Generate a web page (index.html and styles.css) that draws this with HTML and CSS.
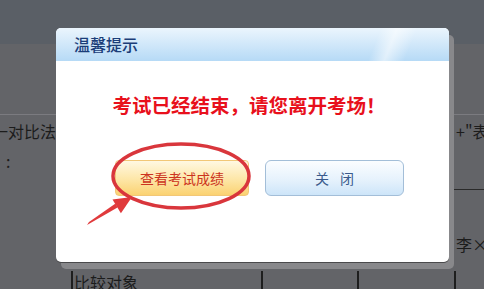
FILE: index.html
```html
<!DOCTYPE html>
<html lang="zh-CN">

<head>
    <meta charset="UTF-8">
    <meta name="viewport" content="width=device-width, initial-scale=1.0">
    <title>温馨提示</title>
    <link rel="stylesheet" href="styles.css">
</head>

<body>

    <!-- pagina de fondo (tabla del examen) -->
    <div class="page">
        <div class="topbar"></div>
        <div class="row row-1">
            <div class="cell cell-main">
                <p class="line line-first">一对比法</p>
                <p class="line line-colon">:</p>
            </div>
            <div class="cell cell-side">
                <p class="line">+"表</p>
            </div>
        </div>
        <div class="row row-2">
            <div class="cell cell-main"></div>
            <div class="cell cell-side cell-top">
                <p class="line">李××</p>
            </div>
        </div>
        <div class="row row-3">
            <div class="cell c1"></div>
            <div class="cell c2">比较对象</div>
            <div class="cell c3"></div>
            <div class="cell c4"></div>
            <div class="cell c5"></div>
        </div>
    </div>

    <!-- dialogo -->
    <div class="dialog">
        <div class="dialog-header">温馨提示</div>
        <div class="dialog-body">
            <p class="message">考试已经结束，请您离开考场！</p>
            <div class="buttons">
                <button class="btn btn-score">查看考试成绩</button>
                <button class="btn btn-close">关 闭</button>
            </div>
        </div>
    </div>

    <!-- marca roja (circulo y flecha) -->
    <svg class="mark" width="484" height="289" viewBox="0 0 484 289">
        <ellipse cx="181" cy="176" rx="68" ry="32" fill="none" stroke="#d9363c" stroke-width="3.5" />
        <polygon points="87,225 89,222 115.5,203.5 117.5,207.5" fill="#e03a3c" />
        <polygon points="132,197 112.5,199.6 120.9,213.2" fill="#e03a3c" />
    </svg>

</body>

</html>
```

FILE: styles.css
```css
body {
    margin: 0;
    width: 484px;
    height: 289px;
    overflow: hidden;
    background-color: #636468;
    font-family: "Noto Sans CJK SC", sans-serif;
    position: relative;
}

.topbar {
    height: 44px;
    background-color: #5a5f66;
    margin-bottom: 70px;
}

.row {
    display: flex;
}

.row-1 {
    height: 74px;
    border-top: 1px solid #7b7b80;
}

.row-2 {
    height: 82px;
}

.row-3 {
    height: 40px;
}

.cell {
    box-sizing: border-box;
    color: #1c1c1c;
    font-size: 16px;
    white-space: nowrap;
    flex-shrink: 0;
}

.cell-main {
    width: 454px;
}

.cell-side {
    flex: 1;
    min-width: 0;
    padding-left: 2px;
}

.cell-top {
    border-top: 1px solid #2a2a2a;
}

.line {
    margin: 6px 0 0;
    line-height: 20px;
}

.line-first {
    text-indent: -8px;
}

.line-colon {
    margin-top: 10px;
    padding-left: 6px;
}

.row-2 .line {
    margin-top: 44px;
}

.c1 {
    width: 71px;
}

.c2 {
    width: 190px;
    border-left: 2px solid #1e1e1e;
    padding: 1px 0 0 1px;
    line-height: 20px;
}

.c3 {
    width: 96px;
    border-left: 2px solid #1e1e1e;
}

.c4 {
    width: 97px;
    border-left: 2px solid #1e1e1e;
}

.c5 {
    flex: 1;
    border-left: 2px solid #1e1e1e;
}

.dialog {
    position: absolute;
    left: 56px;
    top: 28px;
    width: 393px;
    height: 234px;
    background-color: #fff;
    border-radius: 5px;
    box-shadow: 0 1px 0 #4a4a4c, 5px 7px 0 #88888b;
    overflow: hidden;
}

.dialog-header {
    height: 33px;
    line-height: 33px;
    padding-left: 18px;
    color: #1b3d78;
    font-size: 16px;
    font-weight: 500;
    background: linear-gradient(112deg, transparent 80%, rgba(255, 255, 255, 0.55) 84%, transparent 89%),
        linear-gradient(#ebf5fd, #b6daf6);
}

.dialog-body {
    padding-top: 31px;
}

.message {
    margin: 0;
    text-align: center;
    padding-right: 7px;
    color: #e8101c;
    font-size: 19.5px;
    font-weight: bold;
    line-height: 26px;
}

.buttons {
    display: flex;
    gap: 16px;
    padding-left: 59px;
    margin-top: 42px;
}

.btn {
    height: 36px;
    font-family: "Noto Sans CJK SC", sans-serif;
    font-size: 14px;
    cursor: pointer;
    padding: 0;
}

.btn-score {
    width: 134px;
    color: #cc3320;
    border: 1px solid #f2c777;
    border-radius: 4px;
    background: linear-gradient(#fff8e2, #fde6a6 55%, #fbd272);
}

.btn-close {
    width: 139px;
    color: #3b5b8c;
    letter-spacing: 4px;
    padding-left: 4px;
    border: 1px solid #a3bed8;
    border-radius: 6px;
    background: linear-gradient(#fbfdff, #e6f2fc 55%, #cde5f9);
}

.mark {
    position: absolute;
    left: 0;
    top: 0;
    pointer-events: none;
}
```
